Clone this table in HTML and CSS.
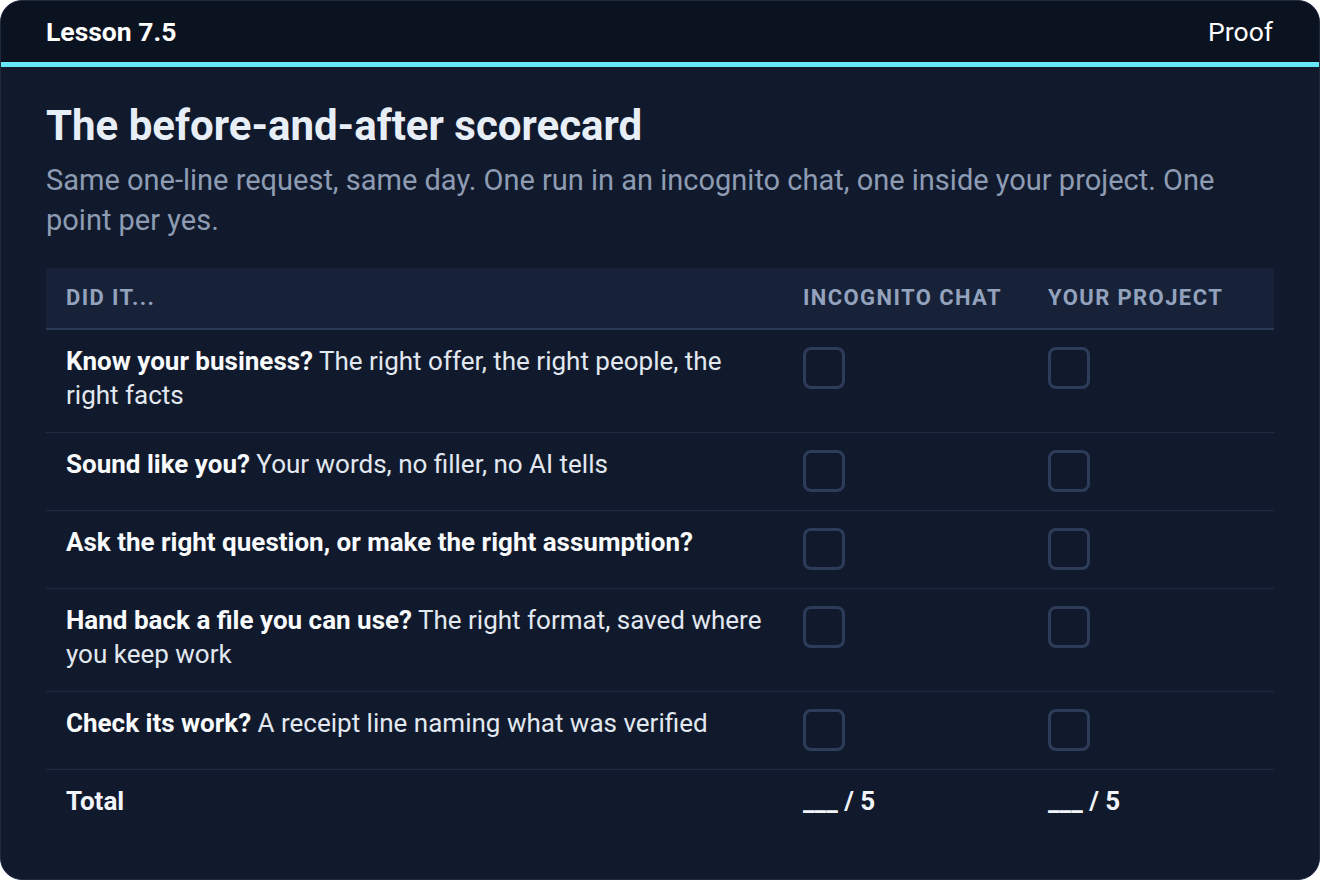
FILE: index.html
```html
<!DOCTYPE html>
<html lang="en">
  <head>
    <meta charset="UTF-8" />
    <meta name="viewport" content="width=device-width, initial-scale=1.0" />
    <title>Lesson 7.5 - Proof</title>
    <link rel="stylesheet" href="styles.css">
  </head>
  <body>
    <div class="card">
      <header class="topbar">
        <span class="lesson">Lesson 7.5</span>
        <span class="tag">Proof</span>
      </header>
      <main class="content">
        <h1>The before-and-after scorecard</h1>
        <p class="intro">Same one-line request, same day. One run in an incognito chat, one inside your project. One point per yes.</p>
        <table class="score">
          <thead>
            <tr>
              <th>Did it...</th>
              <th>Incognito chat</th>
              <th>Your project</th>
            </tr>
          </thead>
          <tbody>
            <tr>
              <td><b>Know your business?</b> The right offer, the right people, the right facts</td>
              <td><span class="box"></span></td>
              <td><span class="box"></span></td>
            </tr>
            <tr>
              <td><b>Sound like you?</b> Your words, no filler, no AI tells</td>
              <td><span class="box"></span></td>
              <td><span class="box"></span></td>
            </tr>
            <tr>
              <td><b>Ask the right question, or make the right assumption?</b></td>
              <td><span class="box"></span></td>
              <td><span class="box"></span></td>
            </tr>
            <tr>
              <td><b>Hand back a file you can use?</b> The right format, saved where you keep work</td>
              <td><span class="box"></span></td>
              <td><span class="box"></span></td>
            </tr>
            <tr>
              <td><b>Check its work?</b> A receipt line naming what was verified</td>
              <td><span class="box"></span></td>
              <td><span class="box"></span></td>
            </tr>
            <tr class="total">
              <td>Total</td>
              <td>___ / 5</td>
              <td>___ / 5</td>
            </tr>
          </tbody>
        </table>
      </main>
    </div>
  </body>
</html>
```

FILE: styles.css
```css
body {
  margin: 0;
  background: #ffffff;
  font-family: Roboto, "Liberation Sans", sans-serif;
}
.card {
  box-sizing: border-box;
  width: 1320px;
  height: 880px;
  background: #111a2c;
  border: 1px solid #1f2a3d;
  border-radius: 22px;
  overflow: hidden;
}
.topbar {
  display: flex;
  justify-content: space-between;
  align-items: center;
  height: 61px;
  padding: 0 46px 0 45px;
  background: #0c1320;
  border-bottom: 5px solid #67e8f9;
  color: #ffffff;
  font-size: 26.5px;
}
.lesson {
  font-weight: 700;
}
.content {
  padding: 34px 45px 0;
}
h1 {
  margin: 0;
  font-size: 42px;
  line-height: 50px;
  font-weight: 700;
  color: #e8eef6;
}
.intro {
  margin: 9px 0 28px;
  font-size: 29px;
  line-height: 40px;
  color: #8e9cb3;
}
.score {
  width: 100%;
  border-collapse: collapse;
  font-size: 26px;
  line-height: 34px;
  color: #e2e8f0;
}
.score th {
  height: 60px;
  padding: 0 20px;
  background: #172239;
  border-bottom: 2px solid #2a3a57;
  text-align: left;
  font-size: 22px;
  font-weight: 700;
  letter-spacing: 1.4px;
  text-transform: uppercase;
  color: #94a3bd;
}
.score th:nth-child(1) {
  width: 697px;
}
.score th:nth-child(2) {
  width: 205px;
}
.score td {
  padding: 17px 20px 18px;
  vertical-align: top;
  border-bottom: 1px solid #1f2b41;
}
.score td:first-child {
  padding-top: 14px;
  padding-bottom: 20px;
}
.score b {
  color: #f8fafc;
}
.box {
  display: block;
  box-sizing: border-box;
  width: 42px;
  height: 42px;
  border: 3px solid #2d3c58;
  border-radius: 8px;
}
.total td {
  padding-top: 14px;
  border-bottom: none;
  font-weight: 700;
  color: #f1f5f9;
}
```
